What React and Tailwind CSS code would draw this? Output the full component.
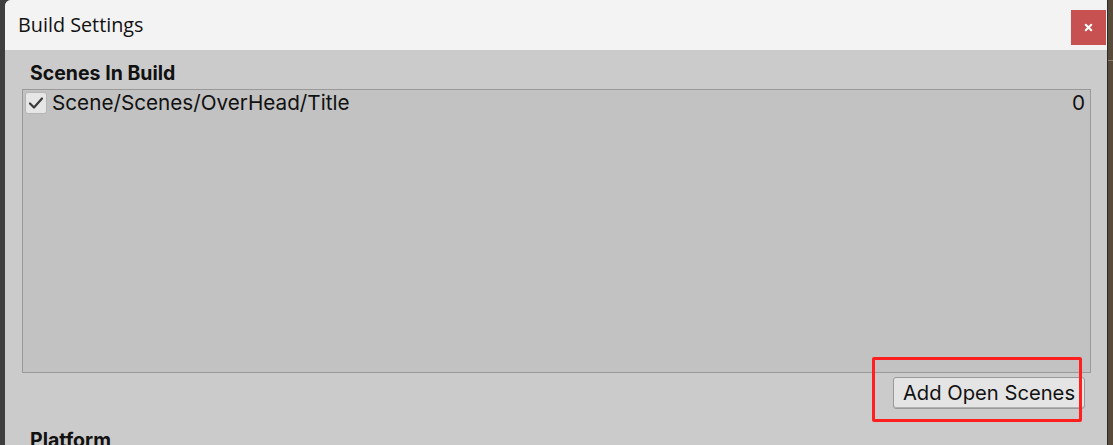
import { X } from "lucide-react";

const ui = { fontFamily: "Inter, 'Noto Sans', sans-serif" };
const titleFont = { fontFamily: "'Open Sans', 'Noto Sans', sans-serif" };

export default function App() {
  return (
    <div className="relative flex h-[445px] w-[1113px] overflow-hidden bg-[#3e3e3e]" style={ui}>
      {/* left edge of the desktop behind */}
      <div className="w-[5px] shrink-0 bg-[#3e3e3e]" />

      {/* window */}
      <div className="flex w-[1102px] shrink-0 flex-col overflow-hidden rounded-tl-[6px] bg-[#cbcbcb]">
        {/* title bar */}
        <div className="flex h-[50px] shrink-0 items-center justify-between bg-[#f3f3f3] pl-[13px] pr-[1px]">
          <span className="text-[19.8px] text-[#111]" style={titleFont}>
            Build Settings
          </span>
          <button className="mt-[4px] flex h-[35px] w-[35px] items-center justify-center bg-[#c75050]">
            <X className="h-[11px] w-[11px] text-white" strokeWidth={4.5} />
          </button>
        </div>

        {/* body */}
        <div className="flex flex-col pl-[17px] pr-[16px]">
          <div className="pl-[8px] pt-[10px] text-[19.5px] font-bold leading-[27px] text-[#111]">
            Scenes In Build
          </div>

          <div className="mt-[2px] h-[284px] border border-[#999] bg-[#c2c2c2]">
            <div className="flex items-center justify-between pl-[2px] pr-[5px] pt-[2px]">
              <div className="flex items-center gap-[5px]">
                <div className="flex h-[22px] w-[22px] items-center justify-center rounded-[3px] border border-[#b5b5b5] bg-[#e6e6e6]">
                  <svg width="16" height="14" viewBox="0 0 16 14" fill="none">
                    <path d="M2 7.5 L6 11.5 L14 2.5" stroke="#3a3a3a" strokeWidth="2.2" strokeLinecap="round" strokeLinejoin="round" />
                  </svg>
                </div>
                <span className="text-[20.7px] leading-[22px] text-[#111]">Scene/Scenes/OverHead/Title</span>
              </div>
              <span className="text-[20.7px] leading-[22px] text-[#111]">0</span>
            </div>
          </div>

          <div className="flex justify-end pr-[6px] pt-[4px]">
            <button className="h-[32px] w-[192px] rounded-[3px] border border-[#999] bg-[#e4e4e4] text-[20.2px] leading-[30px] text-[#111] shadow-[inset_0_-1px_0_#b0b0b0]">
              Add Open Scenes
            </button>
          </div>

          <div className="pl-[8px] pt-[18px] text-[19.5px] font-bold leading-[27px] text-[#111]">
            Platform
          </div>
        </div>
      </div>

      {/* right edge of the desktop behind */}
      <div className="flex w-[6px] shrink-0">
        <div className="w-[1px] bg-[#2e2a24]" />
        <div className="flex flex-1 flex-col bg-[#574b3b]">
          <div className="h-[60px]" />
          <div className="h-[1px] bg-[#8a8070]" />
        </div>
      </div>

      {/* red highlight annotation */}
      <div className="absolute left-[872px] top-[357px] h-[65px] w-[210px] rounded-[2px] border-[3px] border-[#ff1f1f]" />
    </div>
  );
}
